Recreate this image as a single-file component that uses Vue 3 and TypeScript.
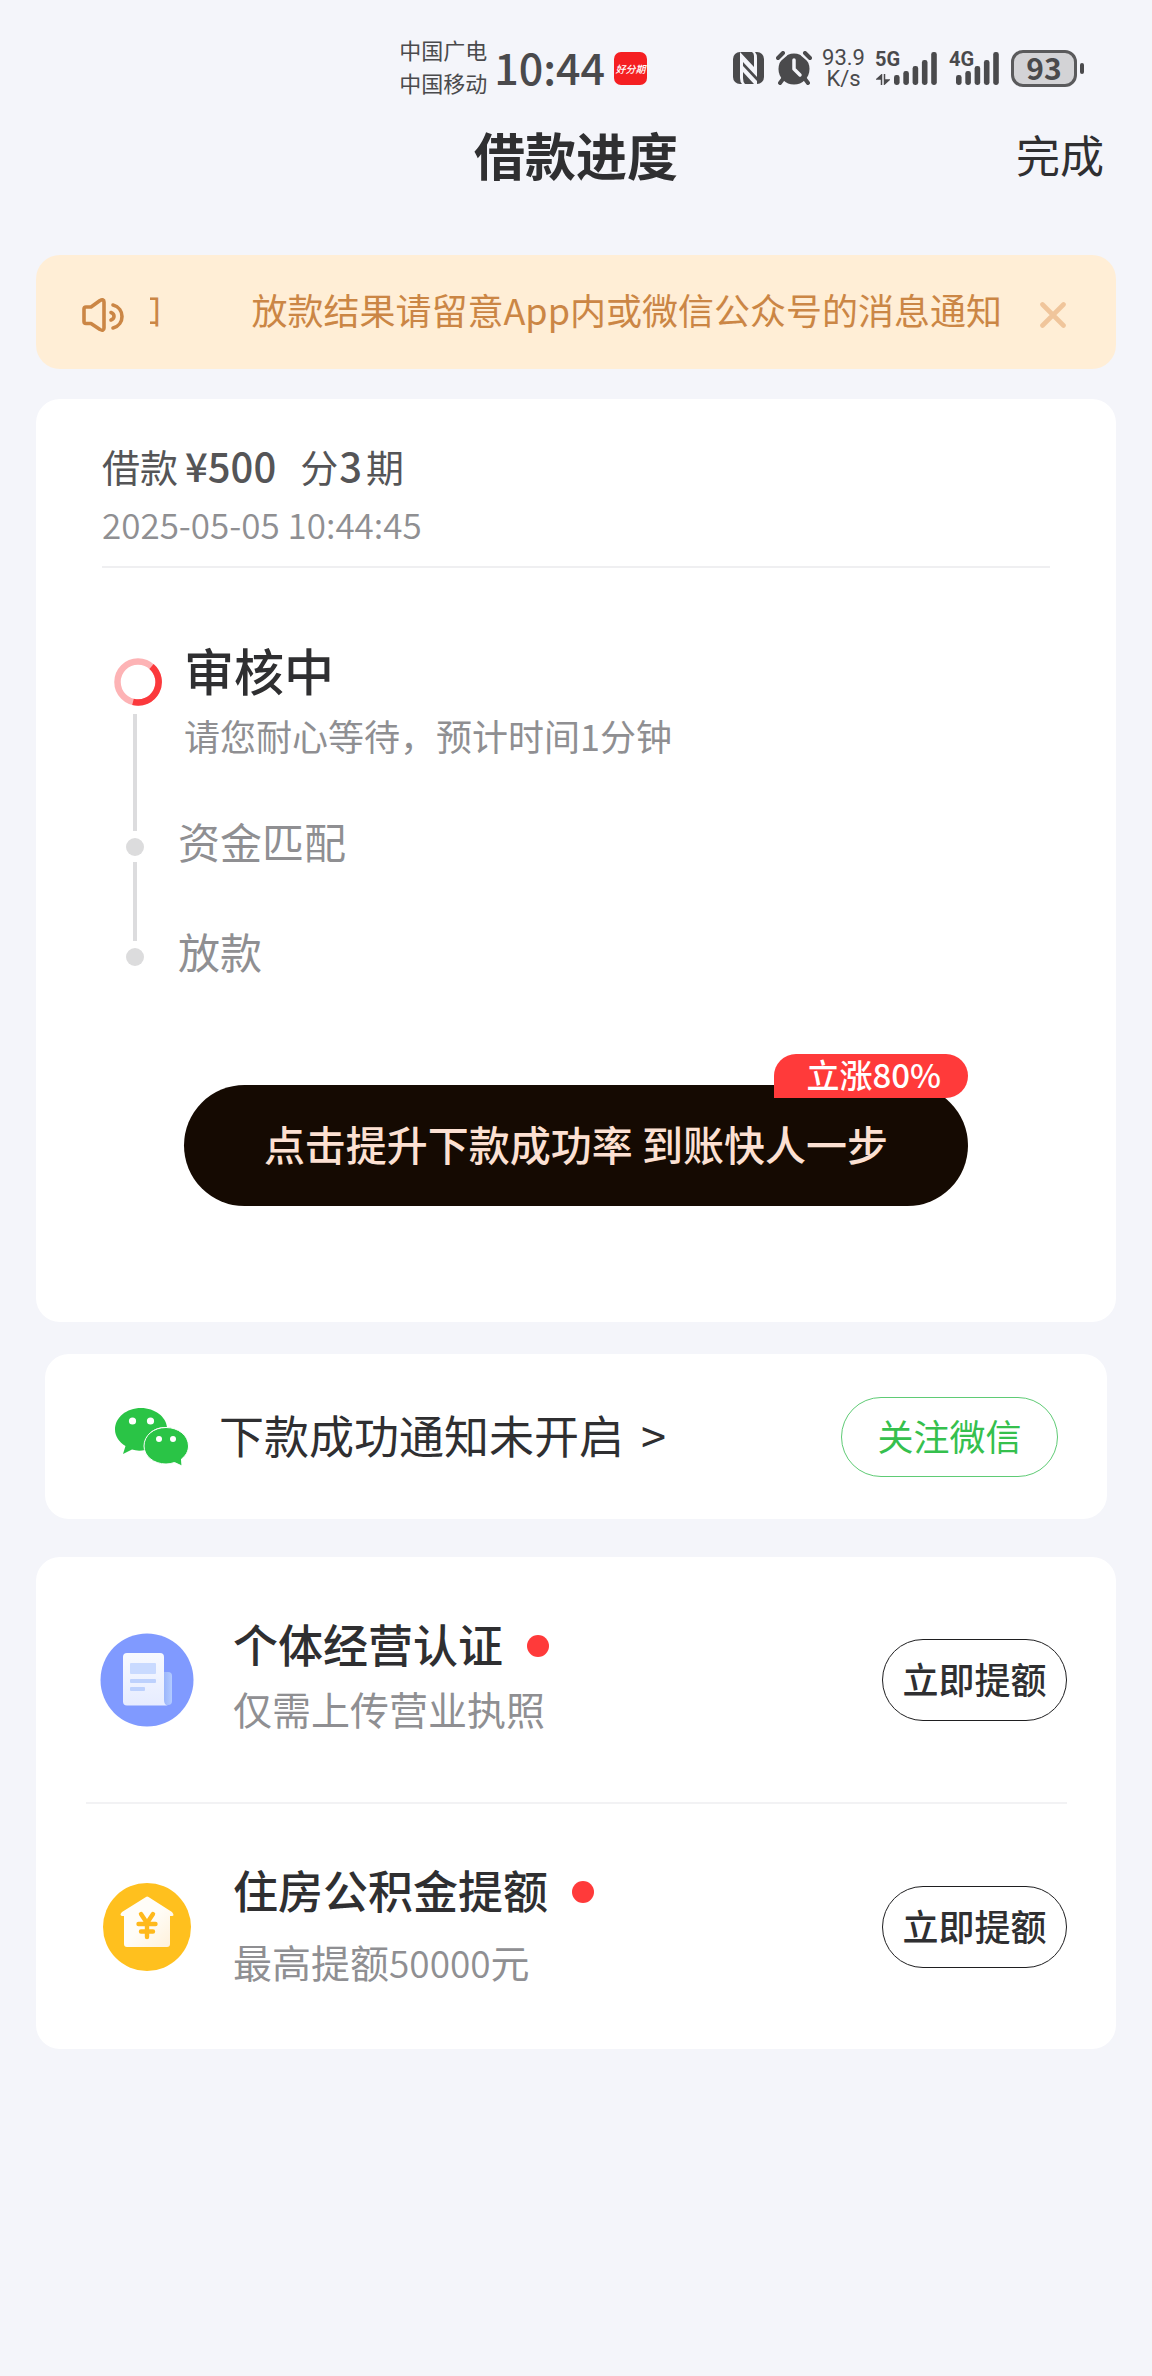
<script setup lang="ts">
import { ref } from 'vue'

interface Step {
  title: string
  desc?: string
  active?: boolean
}

interface Offer {
  id: string
  title: string
  before: string
  amount?: string
  after?: string
}

const notice = '放款结果请留意App内或微信公众号的消息通知'
const noticeOpen = ref(true)

const steps: Step[] = [
  { title: '审核中', desc: '请您耐心等待，预计时间1分钟', active: true },
  { title: '资金匹配' },
  { title: '放款' },
]

const offers: Offer[] = [
  { id: 'business', title: '个体经营认证', before: '仅需上传营业执照' },
  { id: 'house', title: '住房公积金提额', before: '最高提额', amount: '50000', after: '元' },
]

const bars = [10, 14, 19, 25, 33]
</script>

<template>
  <div class="page">
    <div class="status">
      <div class="carriers">
        <span>中国广电</span>
        <span>中国移动</span>
      </div>
      <span class="clock">10:44</span>
      <span class="app-chip">好分期</span>
      <div class="status-right">
        <svg width="31" height="32" viewBox="0 0 31 32">
          <rect width="31" height="32" rx="7" fill="#4a4a4c" />
          <path d="M7 0 L21 15 V4 Q21 1 19 0 H22 Q24 2 24 6 V25 L10 10 V26 Q10 30 12 32 H9 Q7 30 7 26 Z" fill="#f4f5fa" />
          <path d="M10 14 L24 29 V32 H21 L10 20 Z" fill="#f4f5fa" />
        </svg>
        <svg class="alarm" width="36" height="34" viewBox="0 0 36 34">
          <circle cx="18" cy="18" r="15.5" fill="#4a4a4c" />
          <path d="M1 8 L8 2 M35 8 L28 2" stroke="#f4f5fa" stroke-width="8" stroke-linecap="round" />
          <path d="M2 7 L7 2 M34 7 L29 2 M7 28 L4 32 M29 28 L32 32" stroke="#4a4a4c" stroke-width="4" stroke-linecap="round" />
          <path d="M18 9 V18 L24 24" fill="none" stroke="#f4f5fa" stroke-width="3.5" stroke-linecap="round" stroke-linejoin="round" />
        </svg>
        <div class="speed">
          <span>93.9</span>
          <span>K/s</span>
        </div>
        <div class="signal wide">
          <span class="net">5G</span>
          <svg class="arrows" width="14" height="11" viewBox="0 0 14 11">
            <path d="M5.500 11 V1 L1 5 H5.500 M8.500 0 V10 L13 6 H8.500" fill="#4a4a4c" stroke="#4a4a4c" stroke-width="1.5" />
          </svg>
          <svg width="43" height="34" viewBox="0 0 43 34">
            <rect v-for="(h, i) in bars" :key="i" :x="i * 9.3" :y="34 - h" width="5.6" :height="h" rx="2.4" fill="#4a4a4c" />
          </svg>
        </div>
        <div class="signal">
          <span class="net">4G</span>
          <svg width="43" height="34" viewBox="0 0 43 34">
            <rect v-for="(h, i) in bars" :key="i" :x="i * 9.3" :y="34 - h" width="5.6" :height="h" rx="2.4" fill="#4a4a4c" />
          </svg>
        </div>
        <div class="battery">
          <span class="cell">93</span>
          <span class="nub"></span>
        </div>
      </div>
    </div>

    <header class="nav">
      <h1>借款进度</h1>
      <button type="button" class="done">完成</button>
    </header>

    <main>
      <section v-if="noticeOpen" class="notice">
        <svg class="notice-icon" width="42" height="34" viewBox="0 0 42 34" fill="none" stroke="#cb8645" stroke-width="3.6" stroke-linecap="round" stroke-linejoin="round">
          <path d="M2 11 Q2 9 4 9 H9 L18 2.5 Q22 .5 22 4 V30 Q22 33.500 18 31.500 L9 25.500 H4 Q2 25.500 2 23.500 Z" />
          <path d="M31 7 C43 10 43 27 31 30" />
          <path d="M29 14.500 C33 16 33 20.500 29 22" />
        </svg>
        <div class="marquee">
          <span aria-hidden="true">{{ notice.slice(-1) }}</span>
          <span>{{ notice }}</span>
        </div>
        <button type="button" class="close" aria-label="关闭" @click="noticeOpen = false">
          <svg width="26" height="26" viewBox="0 0 26 26" stroke="#f0c59b" stroke-width="4.600" stroke-linecap="round">
            <path d="M2.500 2.500 L23.500 23.500 M23.500 2.500 L2.500 23.500" />
          </svg>
        </button>
      </section>

      <section class="card progress">
        <div class="loan">
          <p class="loan-title">借款<b class="money">¥500</b>分<b class="terms">3</b>期</p>
          <time class="loan-time">2025-05-05 10:44:45</time>
        </div>
        <ol class="steps">
          <li v-for="(step, i) in steps" :key="step.title" :class="{ active: step.active }">
            <div class="marker">
              <svg v-if="step.active" width="54" height="48" viewBox="0 0 54 48" fill="none" stroke-width="6.500">
                <circle cx="30" cy="24" r="20.500" stroke="#fdb3b5" />
                <path d="M43.500 8.500 A20.500 20.500 0 0 1 25 43.900" stroke="#fb393c" />
              </svg>
              <span v-else class="dot"></span>
              <span v-if="i < steps.length - 1" class="line"></span>
            </div>
            <div class="step-text">
              <p class="step-title">{{ step.title }}</p>
              <p v-if="step.desc" class="step-desc">{{ step.desc }}</p>
            </div>
          </li>
        </ol>
        <button type="button" class="boost">
          点击提升下款成功率 到账快人一步
          <span class="boost-tag">立涨80%</span>
        </button>
      </section>

      <section class="card wechat">
        <svg width="74" height="58" viewBox="0 0 74 58">
          <path d="M26 0 C40 0 51 9 52 19 C38 18 28 28 30 42 Q23 43.500 17 41.500 L8 46 L10.500 38 C4 34 0 28 0 21.500 C0 9.500 11.500 0 26 0 Z" fill="#2ac446" />
          <path d="M51 19.500 C63.500 19.500 73.500 27.500 73.500 38 C73.500 43.500 70.500 48 66.500 51 L67 58 L59.500 54.500 Q55 56 51 56 C38.500 56 29 48 29 38 C29 27.500 38.500 19.500 51 19.500 Z" fill="#2ac446" stroke="#fff" stroke-width="1" />
          <circle cx="17.500" cy="13" r="3.600" fill="#fff" />
          <circle cx="35.500" cy="13" r="3.600" fill="#fff" />
          <circle cx="44" cy="31" r="3" fill="#fff" />
          <circle cx="58" cy="31" r="3" fill="#fff" />
        </svg>
        <a href="#notify" class="wechat-link">下款成功通知未开启<span class="more">&gt;</span></a>
        <button type="button" class="pill follow">关注微信</button>
      </section>

      <section class="card offers">
        <article v-for="offer in offers" :key="offer.id" class="offer" :class="offer.id">
          <svg v-if="offer.id === 'business'" class="offer-icon" width="94" height="94" viewBox="0 0 94 94">
            <defs>
              <linearGradient id="sheet" x1="0" y1="0" x2="0" y2="1">
                <stop offset="0" stop-color="#f7f9ff" />
                <stop offset="1" stop-color="#e6ecff" />
              </linearGradient>
              <linearGradient id="curl" x1="0" y1="0" x2="1" y2="0">
                <stop offset="0" stop-color="#8fabf9" />
                <stop offset="1" stop-color="#b3cbff" />
              </linearGradient>
            </defs>
            <circle cx="47" cy="47" r="46.500" fill="#809aff" />
            <path d="M60 39 H68 Q72 39 72 43 V68 Q72 72 68 72 H60 Z" fill="url(#curl)" />
            <path d="M27 20 H60 Q64 20 64 24 V67 Q64 72 68 72.500 H27 Q23 72.500 23 68.500 V24 Q23 20 27 20 Z" fill="url(#sheet)" />
            <rect x="30" y="30" width="26" height="11" rx="1" fill="#c9daff" />
            <rect x="30" y="46" width="26" height="4" rx="1" fill="#bdd1fd" />
            <rect x="30" y="54" width="15" height="4" rx="1" fill="#bdd1fd" />
          </svg>
          <svg v-else class="offer-icon" width="94" height="94" viewBox="0 0 94 94">
            <defs>
              <linearGradient id="house" x1="0" y1="0" x2="1" y2="1">
                <stop offset="0.500" stop-color="#fffdf8" />
                <stop offset="1" stop-color="#fff0d8" />
              </linearGradient>
            </defs>
            <circle cx="47" cy="47" r="44" fill="#ffc01e" />
            <path d="M46 17 Q47 16 48.500 17 L72 32 Q75 36 72 36 H70 V64 Q70 67 67 67 H27 Q24 67 24 64 V36 H22 Q19 35 22 32 Z" fill="url(#house)" />
            <path d="M41 34 L47 43 L53 34 M47 43 V57 M38.500 44 H55.500 M41 51.500 H53" fill="none" stroke="#ffb91c" stroke-width="4.400" stroke-linecap="round" />
          </svg>
          <div class="offer-text">
            <h2>{{ offer.title }}<i class="new-dot"></i></h2>
            <p>{{ offer.before }}<span v-if="offer.amount" class="amount">{{ offer.amount }}</span>{{ offer.after }}</p>
          </div>
          <button type="button" class="pill raise">立即提额</button>
        </article>
      </section>
    </main>
  </div>
</template>

<style>
body {
  margin: 0;
  background: #f4f5fa;
}
</style>

<style scoped>
.page {
  min-height: 100vh;
  box-sizing: border-box;
  background: #f4f5fa;
  color: #2f2f31;
  font-family: "Noto Sans CJK SC", sans-serif;
}

h1, h2, p, ol {
  margin: 0;
  padding: 0;
  font-weight: 400;
}

button {
  margin: 0;
  padding: 0;
  border: 0;
  background: none;
  color: inherit;
  font: inherit;
  cursor: pointer;
}

svg {
  display: block;
  flex: none;
}

/* status bar */
.status {
  display: flex;
  align-items: center;
  justify-content: flex-end;
  height: 80px;
  padding: 28px 68px 0 0;
  color: #4a4a4c;
}

.carriers {
  display: flex;
  flex-direction: column;
  padding-bottom: 4px;
  font-size: 22px;
  line-height: 33px;
}

.clock {
  margin: 0 9px 0 7px;
  padding-bottom: 5px;
  font-size: 43px;
  font-weight: 500;
  line-height: 66px;
}

.app-chip {
  width: 33px;
  border-radius: 7px;
  background: #f51f22;
  color: #fff;
  font-size: 10px;
  font-style: italic;
  font-weight: 500;
  line-height: 33px;
  text-align: center;
}

.status-right {
  display: flex;
  align-items: center;
  margin-left: 86px;
}

.alarm {
  margin-left: 12px;
}

.speed {
  display: flex;
  flex-direction: column;
  align-items: center;
  margin: 0 10px;
  font-family: Roboto, sans-serif;
  font-size: 22px;
  line-height: 21px;
}

.signal {
  position: relative;
  display: flex;
  justify-content: flex-end;
  width: 50px;
  margin-right: 12px;
}

.signal.wide {
  width: 62px;
}

.net {
  position: absolute;
  top: 0;
  left: 0;
  font-family: Roboto, sans-serif;
  font-size: 20px;
  font-weight: 700;
  line-height: 16px;
}

.arrows {
  position: absolute;
  left: 1px;
  bottom: 0;
}

.battery {
  display: flex;
  align-items: center;
}

.cell {
  width: 60px;
  padding-bottom: 3px;
  border: 3px solid #5a5a5c;
  border-radius: 12px;
  background: #d3d3d6;
  font-size: 30px;
  font-weight: 700;
  line-height: 28px;
  text-align: center;
}

.nub {
  width: 4px;
  height: 11px;
  margin-left: 3px;
  border-radius: 2px;
  background: #4a4a4c;
}

/* title bar */
.nav {
  display: grid;
  grid-template-columns: 1fr auto 1fr;
  align-items: center;
  height: 92px;
  padding: 0 48px;
}

.nav h1 {
  grid-column: 2;
  font-size: 51px;
  font-weight: 700;
  line-height: 76px;
}

.done {
  justify-self: end;
  font-size: 44px;
  line-height: 66px;
}

main {
  padding: 55px 36px 0;
}

/* notice */
.notice {
  display: flex;
  align-items: center;
  height: 114px;
  margin-bottom: 30px;
  padding: 0 50px 0 46px;
  border-radius: 24px;
  background: #ffeed6;
  color: #cb8645;
}

.notice-icon,
.close {
  margin-top: 6px;
}

.marquee {
  display: flex;
  flex: 1;
  justify-content: flex-end;
  gap: 90px;
  min-width: 0;
  margin: 0 38px 0 26px;
  padding-bottom: 7px;
  overflow: hidden;
  font-size: 36px;
  line-height: 54px;
  white-space: nowrap;
}

.marquee span {
  flex: none;
}

.card {
  border-radius: 24px;
  background: #fff;
}

/* loan progress */
.progress {
  padding: 38px 66px 116px;
}

.loan {
  padding-bottom: 18px;
  border-bottom: 2px solid #efeff1;
}

.loan-title {
  margin-bottom: 6px;
  color: #555557;
  font-size: 38px;
  line-height: 56px;
}

.loan-title b {
  font-size: 40px;
  font-weight: 500;
}

.money {
  margin: 0 24px 0 7px;
}

.terms {
  margin: 0 4px 0 1px;
}

.loan-time {
  display: block;
  color: #8f8f92;
  font-size: 35px;
  font-weight: 350;
  line-height: 48px;
}

.steps {
  padding-top: 71px;
  list-style: none;
}

.steps li {
  display: flex;
  min-height: 110px;
  color: #8f8f92;
}

.steps li:last-child {
  min-height: 52px;
}

.steps li.active {
  min-height: 176px;
}

.marker {
  display: flex;
  flex-direction: column;
  align-items: center;
  width: 66px;
  margin-right: 10px;
  padding-top: 23px;
  box-sizing: border-box;
}

.active .marker {
  padding-top: 19px;
}

.dot {
  width: 18px;
  height: 18px;
  border-radius: 50%;
  background: #dcdcdd;
}

.line {
  flex: 1;
  width: 4px;
  margin: 6px 0 -16px;
  background: #dcdcde;
}

.active .line {
  margin-top: 8px;
}

.step-title {
  font-size: 42px;
  line-height: 52px;
}

.active .step-text {
  padding-left: 6px;
}

.active .step-title {
  margin-bottom: 10px;
  color: #2f2f31;
  font-size: 50px;
  font-weight: 500;
  line-height: 60px;
}

.step-desc {
  font-size: 36px;
  line-height: 52px;
}

.boost {
  position: relative;
  display: block;
  height: 121px;
  margin: 108px auto 0;
  padding: 0 80px 5px;
  border-radius: 61px;
  background: #150a02;
  color: #fce0d2;
  font-size: 41px;
  font-weight: 500;
  line-height: 60px;
  white-space: nowrap;
}

.boost-tag {
  position: absolute;
  top: -31px;
  right: 0;
  padding: 0 27px 4px 33px;
  border-radius: 22px 22px 22px 0;
  background: #ff3a3a;
  color: #fff;
  font-size: 33px;
  font-weight: 500;
  line-height: 40px;
}

/* WeChat reminder */
.wechat {
  display: flex;
  align-items: center;
  height: 165px;
  margin: 32px 9px 38px;
  padding: 0 49px 0 70px;
}

.wechat-link {
  flex: 1;
  margin-left: 30px;
  padding-bottom: 4px;
  color: #2f2f31;
  font-size: 45px;
  line-height: 66px;
  text-decoration: none;
}

.more {
  margin-left: 17px;
}

.pill {
  padding-bottom: 4px;
  border: 1px solid #1f1f21;
  border-radius: 41px;
  font-size: 36px;
  line-height: 76px;
}

.follow {
  width: 217px;
  border-color: #5fcb75;
  color: #35c04d;
  line-height: 74px;
}

/* credit offers */
.offers {
  padding: 0 49px 0 50px;
}

.offer {
  display: flex;
  align-items: center;
  height: 245px;
}

.offer + .offer {
  border-top: 2px solid #f2f2f4;
}

.offer-icon {
  margin: 0 39px 0 14px;
}

.offer-text {
  display: flex;
  flex: 1;
  flex-direction: column;
  gap: 6px;
  padding-bottom: 10px;
}

.house .offer-text {
  gap: 13px;
  padding-bottom: 4px;
}

.offer-text h2 {
  display: flex;
  align-items: center;
  font-size: 45px;
  font-weight: 500;
  line-height: 60px;
}

.new-dot {
  width: 22px;
  height: 22px;
  margin: 4px 0 0 24px;
  border-radius: 50%;
  background: #ff3a3a;
}

.offer-text p {
  color: #8f8f92;
  font-size: 39px;
  line-height: 56px;
}

.amount {
  font-size: 37px;
  font-weight: 350;
}

.raise {
  width: 185px;
  font-weight: 500;
}
</style>
